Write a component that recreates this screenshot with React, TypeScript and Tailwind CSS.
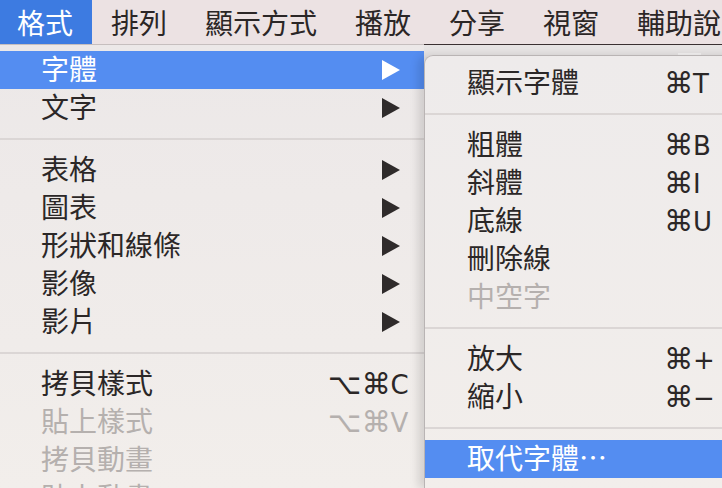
import React from "react";

type Item =
  | { sep: true }
  | { label: string; sub?: boolean; key?: string; disabled?: boolean; active?: boolean };

const FONT = { fontFamily: '"Noto Sans CJK TC", "Noto Sans", sans-serif' };
const KEYFONT = { fontFamily: '"DejaVu Sans", "Liberation Sans", sans-serif' };

const menuBar = ["格式", "排列", "顯示方式", "播放", "分享", "視窗", "輔助說明"];

const formatMenu: Item[] = [
  { label: "字體", sub: true, active: true },
  { label: "文字", sub: true },
  { sep: true },
  { label: "表格", sub: true },
  { label: "圖表", sub: true },
  { label: "形狀和線條", sub: true },
  { label: "影像", sub: true },
  { label: "影片", sub: true },
  { sep: true },
  { label: "拷貝樣式", key: "⌥⌘C" },
  { label: "貼上樣式", key: "⌥⌘V", disabled: true },
  { label: "拷貝動畫", disabled: true },
  { label: "貼上動畫", disabled: true },
];

const fontMenu: Item[] = [
  { label: "顯示字體", key: "⌘T" },
  { sep: true },
  { label: "粗體", key: "⌘B" },
  { label: "斜體", key: "⌘I" },
  { label: "底線", key: "⌘U" },
  { label: "刪除線" },
  { label: "中空字", disabled: true },
  { sep: true },
  { label: "放大", key: "⌘+" },
  { label: "縮小", key: "⌘−" },
  { sep: true },
  { label: "取代字體⋯", active: true },
];

function Arrow({ white }: { white?: boolean }) {
  return (
    <svg width="18" height="20" viewBox="0 0 18 20" className="absolute left-[382px] top-[9px]">
      <polygon points="0,0 18,10 0,20" fill={white ? "#ffffff" : "#2f2b2b"} />
    </svg>
  );
}

// modifier glyphs drawn a bit larger than the key letter, like the macOS menu font
function Shortcut({ k }: { k: string }) {
  const mods = k.slice(0, -1);
  const letter = k.slice(-1);
  return (
    <span className="flex items-baseline">
      <span className="text-[29px]">{mods}</span>
      <span className="text-[26px]">{letter}</span>
    </span>
  );
}

function MenuRows({ items, textLeft, keyLeft }: { items: Item[]; textLeft: string; keyLeft: string }) {
  return (
    <>
      {items.map((it, i) => {
        if ("sep" in it) {
          return (
            <div key={i} className="h-[24px] flex items-center">
              <div className="h-[2px] w-full bg-[#dbd6d5]" />
            </div>
          );
        }
        const color = it.active ? "text-white" : it.disabled ? "text-[#b5b0ae]" : "text-[#2b2727]";
        return (
          <div
            key={i}
            className={`relative h-[38px] flex items-center text-[28px] leading-none ${color} ${
              it.active ? "bg-[#548df1]" : ""
            }`}
          >
            <span className={`absolute ${textLeft} top-[3px] whitespace-nowrap`}>{it.label}</span>
            {it.key && (
              <span style={KEYFONT} className={`absolute ${keyLeft} top-[5px] whitespace-nowrap`}>
                <Shortcut k={it.key} />
              </span>
            )}
            {it.sub && <Arrow white={it.active} />}
          </div>
        );
      })}
    </>
  );
}

export default function App() {
  return (
    <div style={FONT} className="w-[722px] h-[488px] overflow-hidden bg-[#efebea] flex flex-col">
      {/* menu bar */}
      <div className="h-[44px] shrink-0 flex bg-[#ece2e3] text-[28px] text-[#2b2626] whitespace-nowrap">
        {menuBar.map((m, i) => (
          <div
            key={m}
            className={`h-full flex items-center ${i === 0 ? "pl-[17px] pr-[19px] bg-[#3d7be1] text-white" : "px-[19px]"}`}
          >
            {m}
          </div>
        ))}
      </div>
      <div className="flex h-[1px] shrink-0">
        <div className="w-[424px] bg-[#c6bebe]" />
        <div className="flex-1 bg-[#3b3132]" />
      </div>

      <div className="flex flex-1 min-h-0">
        {/* format menu */}
        <div className="w-[424px] shrink-0 pt-[6px] bg-gradient-to-b from-[#ece8e8] to-[#f2eeeb]">
          <MenuRows items={formatMenu} textLeft="left-[41px]" keyLeft="left-[328px]" />
        </div>

        {/* font submenu */}
        <div className="flex-1 flex flex-col bg-[#e7e4e4]">
          <div className="h-[10px] shrink-0 relative">
            <div className="absolute left-[254px] top-[8px] w-[23px] h-[2px] bg-[#f4f2f2]" />
          </div>
          <div className="relative flex-1 w-[340px] rounded-tl-[9px] border-l border-t border-[#b9b4b4] pt-[8px] bg-gradient-to-b from-[#eeebeb] to-[#f2eeeb] shadow-[-6px_0_8px_rgba(0,0,0,0.12)]">
            <MenuRows items={fontMenu} textLeft="left-[42px]" keyLeft="left-[239px]" />
          </div>
        </div>
      </div>
    </div>
  );
}
